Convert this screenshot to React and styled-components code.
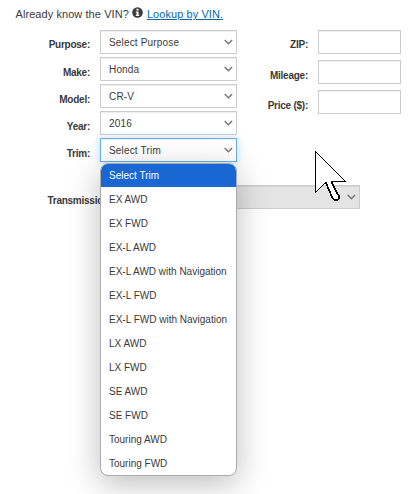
import React from 'react';
import styled, { createGlobalStyle } from 'styled-components';

const GlobalStyle = createGlobalStyle`
  * { box-sizing: border-box; }
  body {
    margin: 0;
    background: #fff;
    color: #3a3a3a;
    font: 10px/14px "Liberation Sans", Arial, sans-serif;
    overflow: hidden;
  }
`;

const Page = styled.main`
  position: relative;
  width: 415px;
  height: 494px;
  padding-top: 6px;
  overflow: hidden;
`;

const VinLine = styled.div`
  display: flex;
  align-items: center;
  height: 16px;
  padding-left: 15.5px;
  font-size: 11px;
  line-height: 16px;
  letter-spacing: 0.07px;
  white-space: pre;
`;

const InfoIcon = styled.svg`
  width: 11px;
  height: 11px;
  margin: -3px 4px 0 3px;
`;

const VinLink = styled.a`
  color: #0868a5;
  text-decoration: underline;
  text-underline-offset: 1px;
`;

const Columns = styled.div`
  display: grid;
  grid-template-columns: 237px 164px;
  padding-top: 8px;
`;

const Column = styled.div`
  display: flex;
  flex-direction: column;
  gap: ${(p) => p.$gap}px;
`;

const Field = styled.div`
  display: grid;
  grid-template-columns: ${(p) => p.$cols};
  column-gap: 10px;
  position: relative;
  height: 24px;
`;

const Label = styled.label`
  padding-top: ${(p) => p.$top ?? 8}px;
  font-weight: 700;
  letter-spacing: -0.25px;
  text-align: right;
  white-space: nowrap;
`;

const SelectBox = styled.div`
  display: flex;
  align-items: center;
  justify-content: space-between;
  height: 24px;
  padding: 1px 3px 0 8px;
  border: 1px solid ${(p) => (p.$active ? '#66afe9' : '#ccc')};
  background: ${(p) => (p.$disabled ? '#e4e4e4' : '#fff')};
  box-shadow: ${(p) =>
    p.$active
      ? 'inset 0 1px 1px rgba(0,0,0,.07), 0 0 8px rgba(102,175,233,.45)'
      : 'inset 0 1px 1px rgba(0,0,0,.07)'};
  letter-spacing: 0.17px;
`;

const TextInput = styled.input`
  width: 83px;
  height: 24px;
  border: 1px solid #ccc;
  border-radius: 0;
  outline: 0;
  box-shadow: inset 0 1px 1px rgba(0, 0, 0, 0.07);
`;

const ChevronIcon = styled.svg`
  width: 9px;
  height: 6px;
  margin-top: -2px;
`;

const Menu = styled.ul`
  position: absolute;
  z-index: 2;
  top: 25px;
  left: 100px;
  width: 137px;
  height: 313px;
  margin: 0;
  padding: 0;
  list-style: none;
  background: #fff;
  border: 1px solid #aaabad;
  border-radius: 8px;
  box-shadow: 0 8px 32px rgba(0, 0, 0, 0.26);
  overflow: hidden;
`;

const Option = styled.li`
  height: ${(p) => (p.$selected ? 23 : 24)}px;
  padding-left: 8px;
  line-height: ${(p) => (p.$selected ? 24 : 25)}px;
  white-space: nowrap;
  color: ${(p) => (p.$selected ? '#fff' : '#3a3a3a')};
  background: ${(p) => (p.$selected ? '#1967d2' : 'transparent')};
`;

const TransmissionRow = styled.div`
  width: 360px;
  padding-top: 23px;
`;

const Pointer = styled.svg`
  position: absolute;
  z-index: 3;
  left: 314px;
  top: 150px;
  width: 34px;
  height: 53px;
`;

const Chevron = () => (
  <ChevronIcon viewBox="0 0 9 6">
    <path d="M0.7 1l3.7 3.7L8.1 1" fill="none" stroke="#777" strokeWidth="1.5" />
  </ChevronIcon>
);

const vehicle = [
  { label: 'Purpose:', value: 'Select Purpose', top: 8 },
  { label: 'Make:', value: 'Honda', top: 9 },
  { label: 'Model:', value: 'CR-V', top: 9 },
  { label: 'Year:', value: '2016', top: 9 },
];

const details = [
  { label: 'ZIP:', top: 8 },
  { label: 'Mileage:', top: 9 },
  { label: 'Price ($):', top: 9 },
];

const trims = [
  'Select Trim', 'EX AWD', 'EX FWD', 'EX-L AWD', 'EX-L AWD with Navigation',
  'EX-L FWD', 'EX-L FWD with Navigation', 'LX AWD', 'LX FWD', 'SE AWD',
  'SE FWD', 'Touring AWD', 'Touring FWD',
];

export default function App() {
  return (
    <Page>
      <GlobalStyle />
      <VinLine>
        <span>Already know the VIN?</span>
        <InfoIcon viewBox="0 0 11 11">
          <circle cx="5.5" cy="5.5" r="5.3" fill="#3b3b3b" />
          <path d="M4.5 1.8h2v1.7h-2zM3.8 4.5h2.7v3.3h.8v1.1H3.8V7.8h.8V5.6h-.8z" fill="#fff" />
        </InfoIcon>
        <VinLink href="#vin">Lookup by VIN.</VinLink>
      </VinLine>
      <Columns>
        <Column $gap={3}>
          {vehicle.map((f) => (
            <Field key={f.label} $cols="90px 137px">
              <Label $top={f.top}>{f.label}</Label>
              <SelectBox>{f.value}<Chevron /></SelectBox>
            </Field>
          ))}
          <Field $cols="90px 137px">
            <Label $top={9}>Trim:</Label>
            <SelectBox $active>Select Trim<Chevron /></SelectBox>
            <Menu>
              {trims.map((t, i) => (
                <Option key={t} $selected={i === 0}>{t}</Option>
              ))}
            </Menu>
          </Field>
        </Column>
        <Column $gap={6}>
          {details.map((f) => (
            <Field key={f.label} $cols="71px 83px">
              <Label $top={f.top}>{f.label}</Label>
              <TextInput aria-label={f.label} />
            </Field>
          ))}
        </Column>
      </Columns>
      <TransmissionRow>
        <Field $cols="112px 238px">
          <Label $top={9}>Transmission:</Label>
          <SelectBox $disabled><span /><Chevron /></SelectBox>
        </Field>
      </TransmissionRow>
      <Pointer viewBox="0 0 34 53" shapeRendering="crispEdges">
        <path
          d="M1.5 1.5V42.5L11.5 32.5L18.5 48.5L20.5 50.5H23.5L25.5 48.5V46.5L17.5 31.5H31.5Z"
          fill="#fff"
          stroke="#000"
        />
        <path
          d="M11.5 32L18.5 48L20.5 50H23.5L25 48.5V46.5L17.5 32"
          fill="none"
          stroke="#000"
          strokeWidth="1.7"
        />
      </Pointer>
    </Page>
  );
}
